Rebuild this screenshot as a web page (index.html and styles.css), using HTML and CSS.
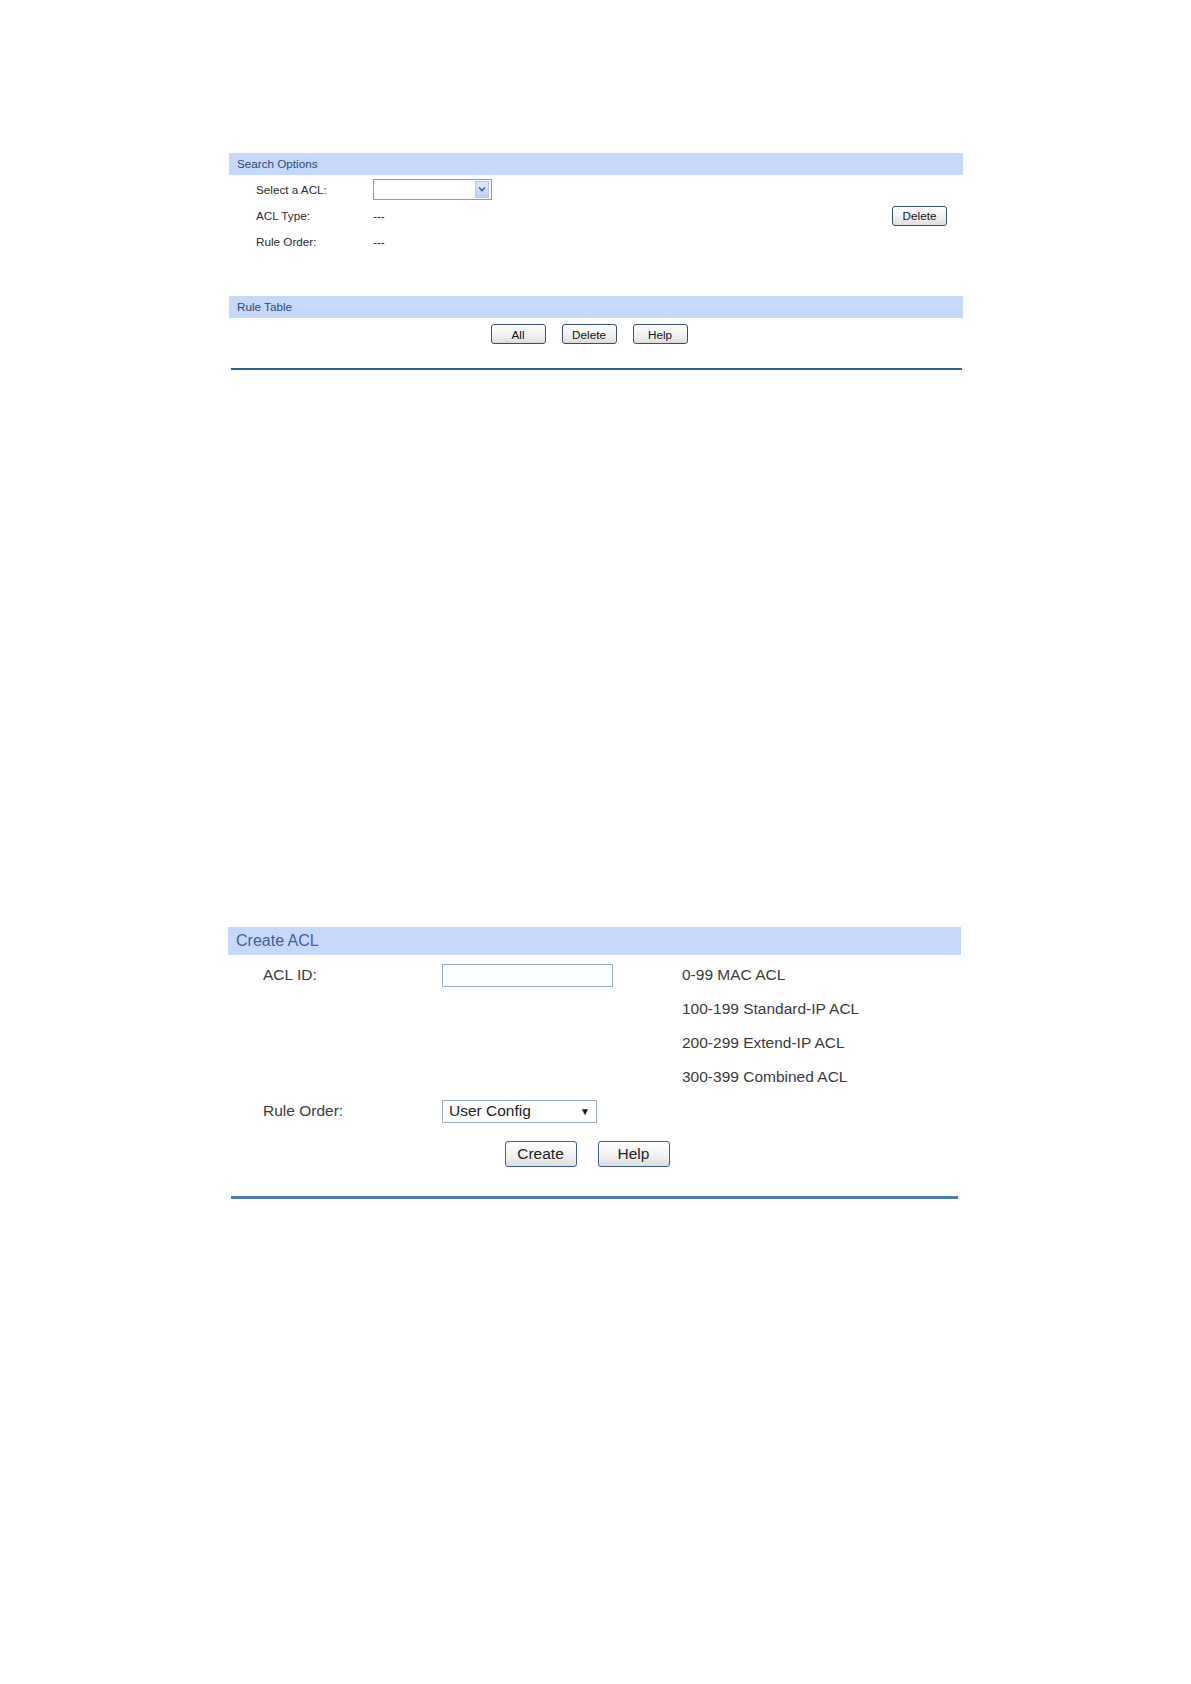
FILE: index.html
```html
<!DOCTYPE html>
<html>
<head>
<meta charset="utf-8">
<link rel="stylesheet" href="styles.css">
</head>
<body>
<div class="top">
  <div class="bar small">Search Options</div>
  <div class="search">
    <div class="rows">
      <div class="row"><span class="lbl">Select a ACL:</span><span class="sel-small"><span class="sel-arrow"><svg width="8" height="6" viewBox="0 0 8 6"><path d="M1 1.5 L4 4.5 L7 1.5" fill="none" stroke="#4a5f8f" stroke-width="1.6"/></svg></span></span></div>
      <div class="row"><span class="lbl">ACL Type:</span><span class="val">---</span></div>
      <div class="row"><span class="lbl">Rule Order:</span><span class="val">---</span></div>
    </div>
    <div class="side"><span class="btn-s">Delete</span></div>
  </div>
  <div class="bar small bar2">Rule Table</div>
  <div class="btnrow-s">
    <span class="btn-s">All</span>
    <span class="btn-s">Delete</span>
    <span class="btn-s">Help</span>
  </div>
  <div class="line1"></div>
</div>

<div class="bottom">
  <div class="bar big">Create ACL</div>
  <div class="grid">
    <span class="lbl2">ACL ID:</span><span class="cell"><span class="input"></span></span><span class="txt">0-99 MAC ACL</span>
    <span></span><span></span><span class="txt">100-199 Standard-IP ACL</span>
    <span></span><span></span><span class="txt">200-299 Extend-IP ACL</span>
    <span></span><span></span><span class="txt">300-399 Combined ACL</span>
    <span class="lbl2">Rule Order:</span><span class="cell"><span class="sel-big"><span>User Config</span><span class="tri">&#9660;</span></span></span><span></span>
  </div>
  <div class="btnrow-b">
    <span class="btn-b">Create</span>
    <span class="btn-b">Help</span>
  </div>
  <div class="line2"></div>
</div>
</body>
</html>
```
FILE: styles.css
```css
html, body { margin: 0; padding: 0; background: #fff; }
body { font-family: "Liberation Sans", Arial, sans-serif; color: #222; }

.top { margin-left: 229px; width: 734px; padding-top: 153px; }
.bar { background: #c6d9fb; box-sizing: border-box; padding-left: 8px; }
.bar.small { height: 22px; line-height: 22px; font-size: 11.7px; color: #2b4a78; }
.bar2 { margin-top: 42px; }

.search { display: flex; margin-top: 1px; }
.rows { flex: 1; padding-left: 27px; }
.row { height: 26px; display: flex; align-items: center; font-size: 11.7px; color: #2a2a2a; }
.lbl { width: 117px; }
.sel-small { width: 119px; height: 21px; box-sizing: border-box; border: 1px solid #7f9db9; background: #fff; display: flex; justify-content: flex-end; align-items: center; padding-right: 2px; }
.sel-arrow { width: 14px; height: 17px; background: linear-gradient(#dfe8fc, #bccffa); border: 1px solid #b7c8ef; box-sizing: border-box; display: flex; align-items: center; justify-content: center; }
.side { display: flex; align-items: center; padding-right: 16px; padding-top: 1px; }

.btn-s { display: inline-flex; align-items: center; justify-content: center; width: 55px; height: 20px; box-sizing: border-box; border: 1px solid #34506e; border-radius: 3px; background: linear-gradient(#ffffff, #ececec 70%, #dcdcdc); font-size: 11.7px; color: #111; }
.btnrow-s { display: flex; justify-content: center; gap: 16px; margin-top: 6px; padding-right: 14px; }
.line1 { height: 2px; background: #2a6482; margin: 24px 1px 0 2px; }

.bottom { margin-left: 228px; width: 733px; margin-top: 557px; }
.bar.big { height: 28px; line-height: 28px; font-size: 16px; color: #3d5e96; }
.grid { display: grid; grid-template-columns: 179px 240px 1fr; grid-auto-rows: 34px; padding-left: 35px; margin-top: 3px; align-items: center; font-size: 15.5px; color: #3a3a3a; }
.cell { display: flex; align-items: center; }
.input { width: 171px; height: 23px; box-sizing: border-box; border: 1px solid #9aacc4; background: #fff; }
.sel-big { width: 155px; height: 23px; box-sizing: border-box; border: 1px solid #9aacc4; background: #fff; display: flex; align-items: center; justify-content: space-between; padding: 0 6px 0 6px; font-size: 15.5px; color: #222; }
.tri { font-size: 10px; color: #111; }

.btnrow-b { display: flex; justify-content: center; gap: 21px; margin-top: 13px; padding-right: 15px; }
.btn-b { display: inline-flex; align-items: center; justify-content: center; width: 72px; height: 26px; box-sizing: border-box; border: 1px solid #3f5f80; border-radius: 3px; background: linear-gradient(#ffffff, #f0f0f0 60%, #dedede); font-size: 15.5px; color: #222; }
.line2 { height: 3px; background: #4a7ba0; margin: 29px 3px 0 3px; }
```
